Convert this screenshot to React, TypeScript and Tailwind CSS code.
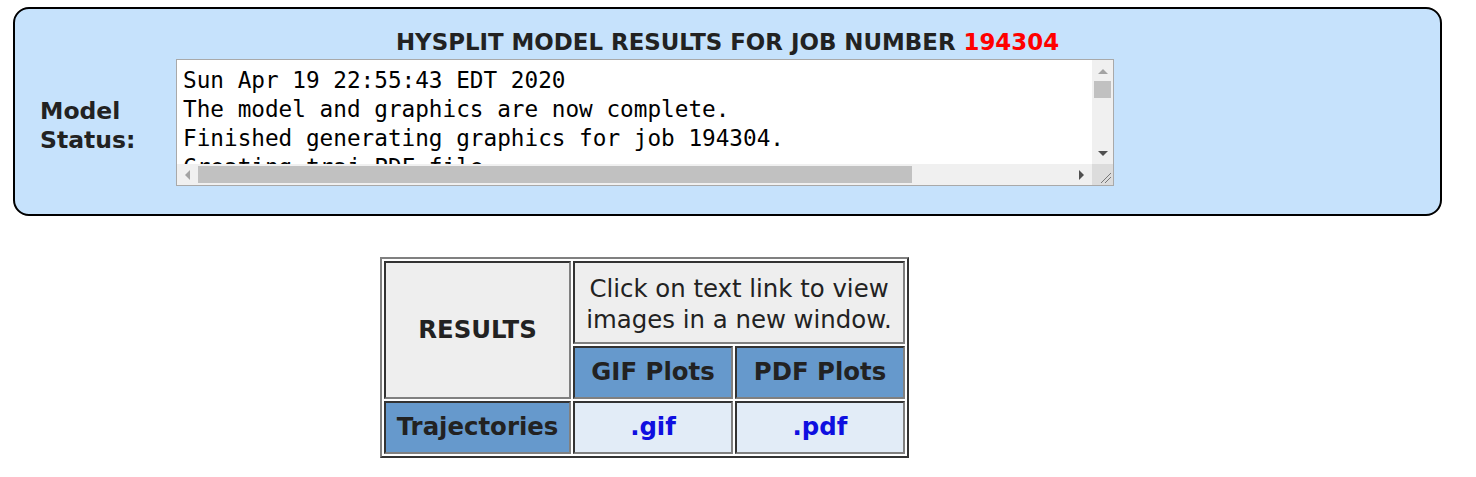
import React from 'react';

const statusLines = [
  'Sun Apr 19 22:55:43 EDT 2020',
  'The model and graphics are now complete.',
  'Finished generating graphics for job 194304.',
  'Creating traj PDF file.',
];

const Tri = ({ dir, color }: { dir: 'up' | 'down' | 'left' | 'right'; color: string }) => {
  const pts = {
    up: '0,5 5,0 10,5',
    down: '0,0 10,0 5,5',
    left: '5,0 5,10 0,5',
    right: '0,0 0,10 5,5',
  }[dir];
  const horiz = dir === 'left' || dir === 'right';
  return (
    <svg width={horiz ? 5 : 10} height={horiz ? 10 : 5} viewBox={horiz ? '0 0 5 10' : '0 0 10 5'}>
      <polygon points={pts} fill={color} />
    </svg>
  );
};

const StatusBox = () => (
  <div className="flex flex-col w-[938px] h-[127px] border border-[#a9a9a9] bg-white">
    <div className="flex flex-1 min-h-0">
      <div className="flex-1 overflow-hidden pl-[6px] pt-[6px] font-['DejaVu_Sans_Mono',monospace] text-[22.7px] leading-[29px] text-black whitespace-pre">
        {statusLines.map((l) => (
          <div key={l}>{l}</div>
        ))}
      </div>
      <div className="w-[21px] bg-[#f0f0f0] flex flex-col items-center">
        <div className="h-[21px] flex items-center justify-center pt-[1px]">
          <Tri dir="up" color="#a3a3a3" />
        </div>
        <div className="w-[17px] h-[17px] bg-[#c1c1c1]" />
        <div className="flex-1" />
        <div className="h-[21px] flex items-center justify-center">
          <Tri dir="down" color="#505050" />
        </div>
      </div>
    </div>
    <div className="flex h-[21px]">
      <div className="flex-1 bg-[#f0f0f0] flex items-center">
        <div className="w-[21px] flex justify-center">
          <Tri dir="left" color="#a3a3a3" />
        </div>
        <div className="w-[714px] h-[17px] bg-[#c1c1c1]" />
        <div className="flex-1" />
        <div className="w-[21px] flex justify-center">
          <Tri dir="right" color="#505050" />
        </div>
      </div>
      <div className="w-[21px] bg-[#dcdcdc] flex items-end justify-end p-[2px]">
        <svg width="12" height="12" viewBox="0 0 12 12">
          <line x1="2" y1="12" x2="12" y2="2" stroke="#777" strokeWidth="1" />
          <line x1="6" y1="12" x2="12" y2="6" stroke="#777" strokeWidth="1" />
        </svg>
      </div>
    </div>
  </div>
);

const cell = 'border-2 border-t-[#333] border-l-[#333] border-b-[#808080] border-r-[#808080] text-center align-middle p-0';

export default function App() {
  return (
    <div className="bg-white min-h-[477px] font-['DejaVu_Sans',Verdana,sans-serif] text-[#222]">
      <div className="pt-[7px] pl-[13px] w-[1442px]">
        <div className="border-2 border-black rounded-[16px] bg-[#c6e2fc] pt-[19px] pb-[28px]">
          <h3 className="text-center font-bold text-[22.9px] leading-[28px] mb-[3px]">
            HYSPLIT MODEL RESULTS FOR JOB NUMBER <span className="text-[#ff0000]">194304</span>
          </h3>
          <div className="flex items-start">
            <div className="w-[161px] pl-[25px] pt-[38px] font-bold text-[23.5px] leading-[29px]">
              Model
              <br />
              Status:
            </div>
            <StatusBox />
          </div>
        </div>
      </div>

      <div className="pt-[41px] pl-[380px]">
        <table className="border-separate border-spacing-[2px] border-2 border-t-[#808080] border-l-[#808080] border-b-[#333] border-r-[#333] text-[24.4px]">
          <tbody>
            <tr>
              <td rowSpan={2} className={`${cell} w-[187px] bg-[#eeeeee] font-bold`}>
                RESULTS
              </td>
              <td colSpan={2} className={`${cell} h-[83px] bg-[#eeeeee] leading-[31px] pt-[2px]`}>
                Click on text link to view
                <br />
                images in a new window.
              </td>
            </tr>
            <tr>
              <td className={`${cell} w-[160px] h-[53px] bg-[#6699cc] font-bold`}>GIF Plots</td>
              <td className={`${cell} w-[170px] h-[53px] bg-[#6699cc] font-bold`}>PDF Plots</td>
            </tr>
            <tr>
              <td className={`${cell} h-[53px] bg-[#6699cc] font-bold`}>Trajectories</td>
              <td className={`${cell} h-[53px] bg-[#e2ecf7] font-bold`}>
                <a href="#" className="text-[#0f0fe0]">.gif</a>
              </td>
              <td className={`${cell} h-[53px] bg-[#e2ecf7] font-bold`}>
                <a href="#" className="text-[#0f0fe0]">.pdf</a>
              </td>
            </tr>
          </tbody>
        </table>
      </div>
    </div>
  );
}
